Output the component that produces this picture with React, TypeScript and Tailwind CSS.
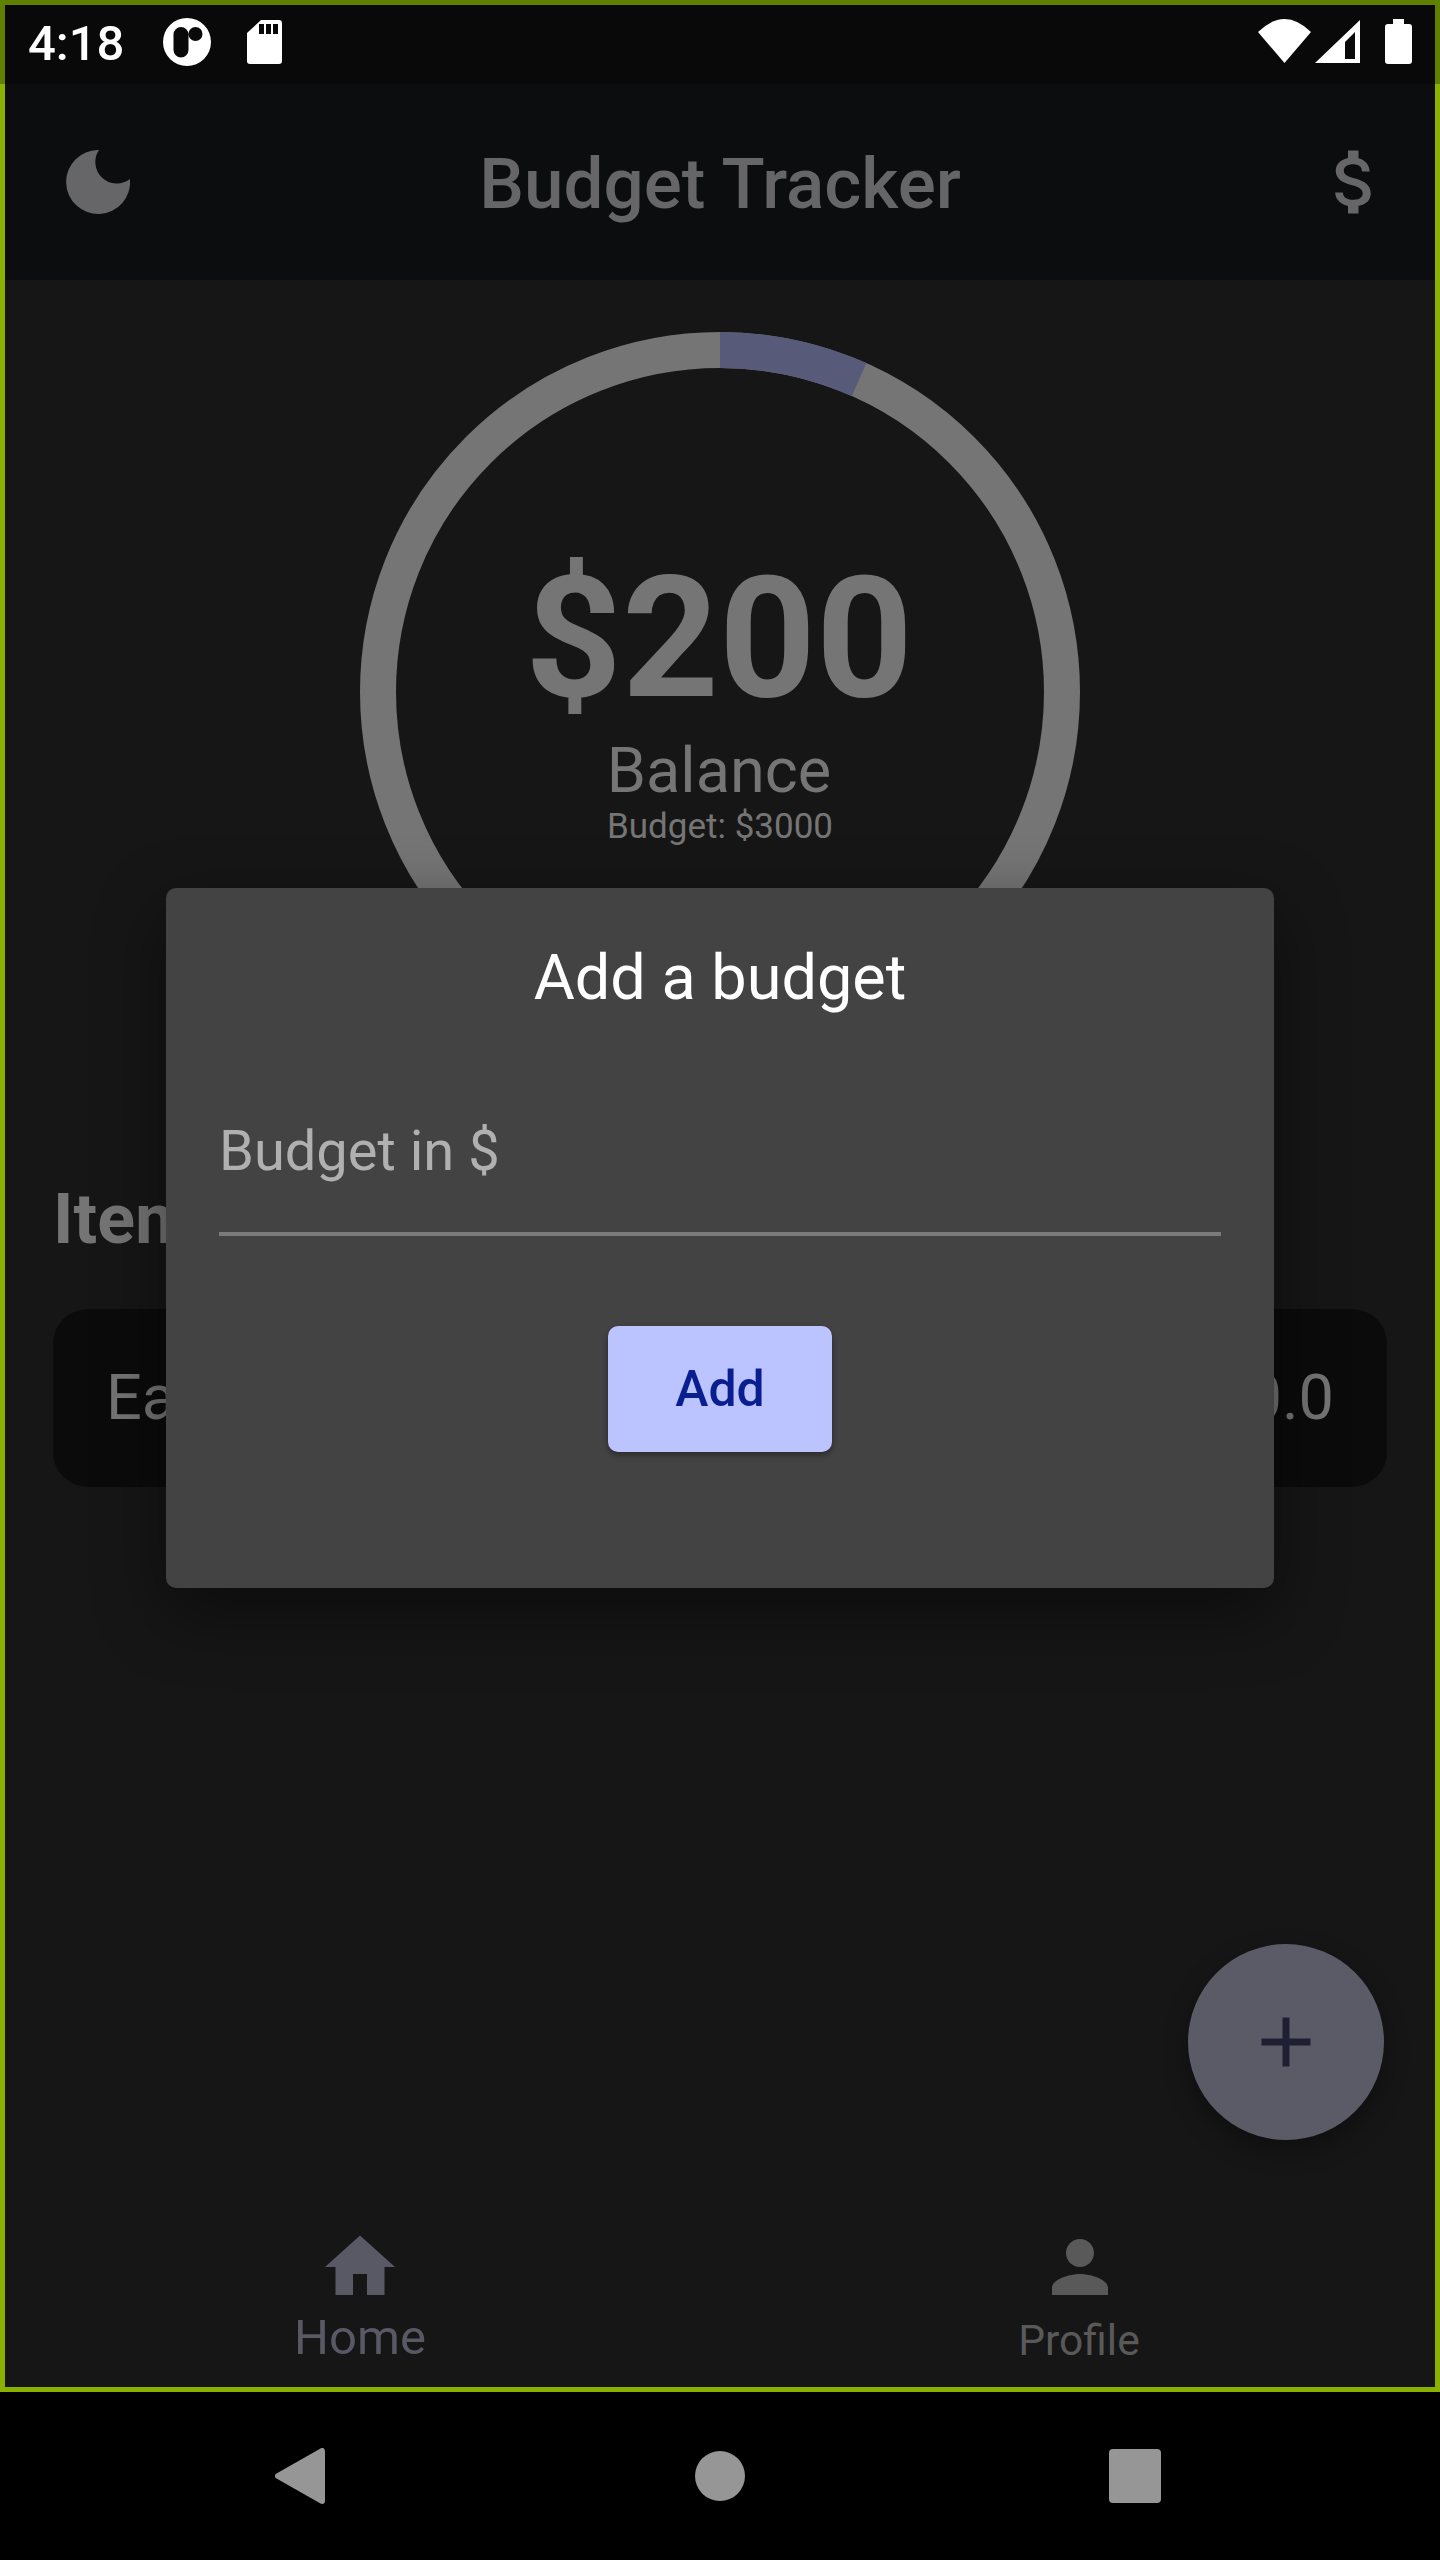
import { MdAdd, MdAttachMoney, MdHome, MdPerson } from 'react-icons/md';

const RING_RADIUS = 342;
const RING_LENGTH = 2 * Math.PI * RING_RADIUS;

function StatusBar() {
	return (
		<div className="flex h-[84px] items-start border-[5px] border-b-0 border-[#5f7f00] bg-[#090909]">
			<span className="ml-[23px] mt-[10px] text-[49px] leading-[57px] font-medium text-white">4:18</span>
			<svg className="ml-[39px] mt-[13px]" width="48" height="48" viewBox="0 0 48 48">
				<path
					fillRule="evenodd"
					fill="#fff"
					d="M24 0a24 24 0 1 0 0 48a24 24 0 1 0 0-48zM18 9a7.500 7.500 0 0 1 7.500 7.500V32a7.500 7.500 0 0 1-15 0V16.500a7.500 7.500 0 0 1 7.500-7.500zM32.500 9a7 7 0 1 0 0 14a7 7 0 1 0 0-14z"
				/>
			</svg>
			<svg className="ml-[36px] mt-[15px]" width="35" height="44" viewBox="0 0 35 44">
				<path fill="#fff" d="M14 0H32a3 3 0 0 1 3 3V41a3 3 0 0 1-3 3H3a3 3 0 0 1-3-3V13z" />
				<path fill="#090909" d="M12 4h5v10h-5zM19 4h5v10h-5zM26 4h5v10h-5z" />
			</svg>
			<div className="ml-auto mt-[14px] mr-[23px] flex items-start">
				<svg width="53" height="44" viewBox="0 0 53 44">
					<path fill="#fff" d="M0 13Q26.500-13 53 13L26.500 44z" />
				</svg>
				<svg className="ml-[4px] mt-[1px]" width="45" height="43" viewBox="0 0 45 43">
					<path fillRule="evenodd" fill="#fff" d="M0 43L45 0V43zM40 12L30 22V39H40z" />
				</svg>
				<svg className="ml-[25px]" width="27" height="45" viewBox="0 0 27 45">
					<path fill="#fff" d="M8 0H19V5H24a3 3 0 0 1 3 3V42a3 3 0 0 1-3 3H3a3 3 0 0 1-3-3V8a3 3 0 0 1 3-3H8z" />
				</svg>
			</div>
		</div>
	);
}

function AppBar() {
	return (
		<div className="grid h-[196px] grid-cols-[1fr_auto_1fr] items-center bg-[#0c0d0f] pb-[1px]">
			<svg className="ml-[61px]" width="64" height="64" viewBox="0 0 64 64">
				<path fill="#666669" d="M33 0A32 32 0 1 0 64 29A21.500 21.500 0 0 1 33 0z" />
			</svg>
			<h1 className="pt-[4px] text-[71px] leading-[82px] font-medium text-[#666669]">Budget Tracker</h1>
			<div className="flex justify-end pr-[38px]">
				<MdAttachMoney size={84} color="#666669" />
			</div>
		</div>
	);
}

function BalanceRing() {
	return (
		<div className="relative mx-auto mt-[52px] h-[720px] w-[720px]">
			<svg width="720" height="720" viewBox="0 0 720 720">
				<circle cx="360" cy="360" r={RING_RADIUS} fill="none" stroke="#757575" strokeWidth="36" />
				<circle
					cx="360"
					cy="360"
					r={RING_RADIUS}
					fill="none"
					stroke="#575a78"
					strokeWidth="36"
					strokeDasharray={`${RING_LENGTH * (200 / 3000)} ${RING_LENGTH}`}
					transform="rotate(-90 360 360)"
				/>
			</svg>
			<div className="absolute inset-x-0 top-[207px] flex flex-col items-center text-[#757575]">
				<span className="-ml-[2px] text-[169px] leading-[198px] font-bold">$200</span>
				<span className="-mt-[3px] -ml-[2px] text-[63px] leading-[74px]">Balance</span>
				<span className="-mt-[2px] text-[35px] leading-[41px]">Budget: $3000</span>
			</div>
		</div>
	);
}

function ItemsList() {
	return (
		<div className="mx-[48px] mt-[127px]">
			<h2 className="text-[70px] leading-[80px] font-bold text-[#757575]">Items</h2>
			<div className="mt-[50px] flex h-[178px] items-center justify-between rounded-[35px] bg-[#0b0b0c] px-[53px] text-[63px] text-[#757575]">
				<span>Eating</span>
				<span>$0.0</span>
			</div>
		</div>
	);
}

function BottomNav() {
	return (
		<div className="-mx-[5px] mt-auto grid h-[162px] grid-cols-2">
			<div className="flex flex-col items-center text-[#585964]">
				<MdHome size={84} color="#585964" />
				<span className="text-[49px] leading-[57px]">Home</span>
			</div>
			<div className="flex flex-col items-center text-[#595959]">
				<MdPerson size={84} color="#595959" />
				<span className="mt-[7px] -ml-[2px] text-[42.500px] leading-[50px]">Profile</span>
			</div>
		</div>
	);
}

function AddBudgetDialog() {
	return (
		<div className="absolute top-[888px] left-[166px] flex h-[700px] w-[1108px] flex-col rounded-[10px] bg-[#434343] px-[53px] shadow-[0_24px_70px_rgba(0,0,0,0.45)]">
			<h3 className="mt-[53px] text-center text-[63px] leading-[74px] text-white">Add a budget</h3>
			<div className="mt-[103px] h-[118px] border-b-[4px] border-[#7b7b7b] text-[56px] leading-[66px] text-[#b0b0b0]">
				Budget in $
			</div>
			<button className="mx-auto mt-[90px] h-[126px] w-[224px] rounded-[10px] bg-[#bcc4ff] text-[50px] font-medium text-[#0a1f8f] shadow-[0_3px_6px_rgba(0,0,0,0.4)]">
				Add
			</button>
		</div>
	);
}

export default function App() {
	return (
		<div className="relative h-[2560px] w-[1440px] overflow-hidden bg-black font-['Roboto',sans-serif]">
			<StatusBar />
			<div className="flex h-[2308px] flex-col border-x-[5px] border-b-[5px] border-[#8cb000] bg-[#161616]">
				<AppBar />
				<BalanceRing />
				<ItemsList />
				<BottomNav />
			</div>
			<div className="absolute top-[1944px] left-[1188px] flex h-[196px] w-[196px] items-center justify-center rounded-full bg-[#5a5b66] shadow-[0_10px_24px_rgba(0,0,0,0.35)]">
				<MdAdd size={84} color="#1f1f33" />
			</div>
			<AddBudgetDialog />
			<div className="flex h-[168px] items-center">
				<svg className="ml-[275px]" width="50" height="56" viewBox="0 0 50 56">
					<path
						fill="#969696"
						stroke="#969696"
						strokeWidth="6"
						strokeLinejoin="round"
						d="M47 3V53L3 28z"
					/>
				</svg>
				<div className="ml-[370px] h-[50px] w-[50px] rounded-full bg-[#969696]" />
				<div className="ml-[364px] h-[54px] w-[52px] rounded-[4px] bg-[#969696]" />
			</div>
		</div>
	);
}
